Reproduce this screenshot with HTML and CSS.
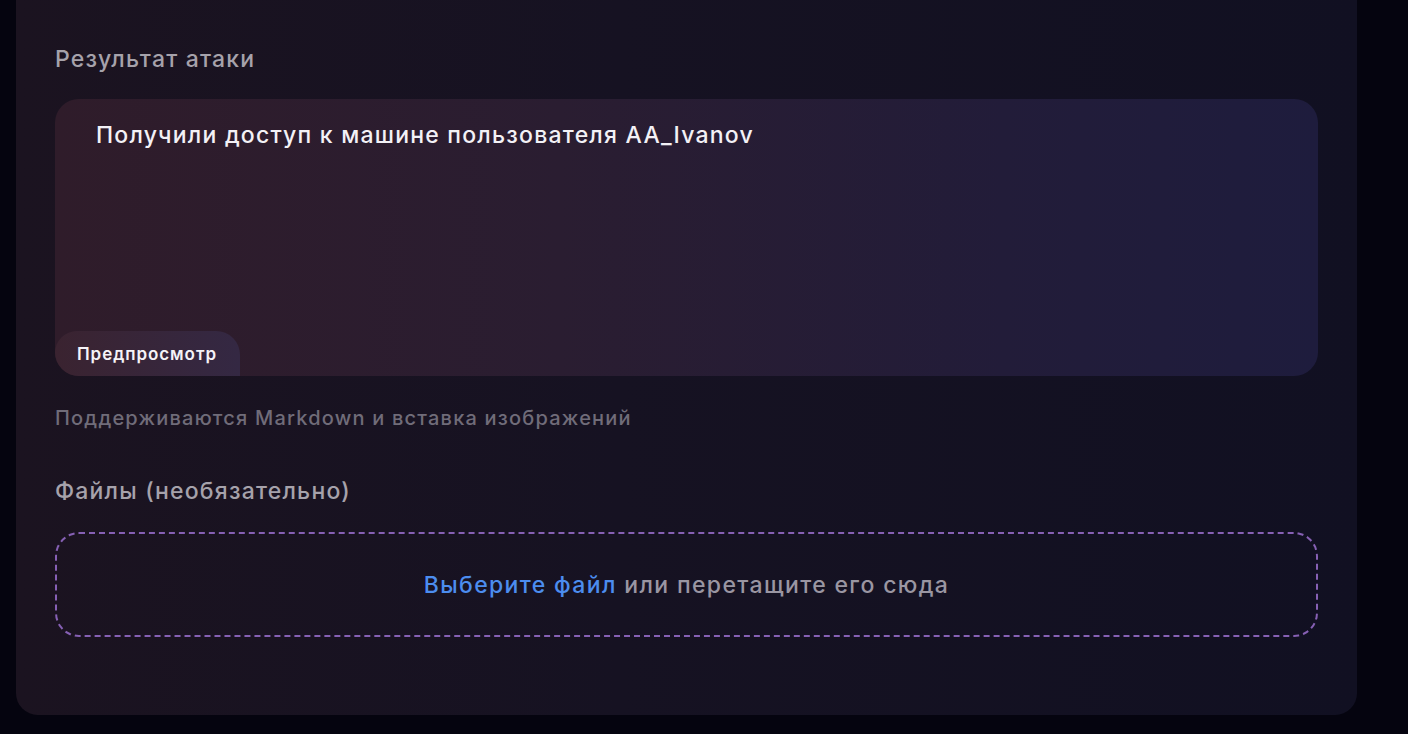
FILE: index.html
```html
<!DOCTYPE html>
<html lang="ru">
<head>
<meta charset="utf-8">
<title>Результат атаки</title>
<link rel="stylesheet" href="styles.css">
</head>
<body>
<div class="page">
  <section class="card">
    <div class="field">
      <div class="label">Результат атаки</div>
      <div class="editor">
        <div class="editor-text">Получили доступ к машине пользователя AA_Ivanov</div>
        <div class="preview-tab">Предпросмотр</div>
      </div>
      <div class="hint">Поддерживаются Markdown и вставка изображений</div>
    </div>
    <div class="field files">
      <div class="label">Файлы (необязательно)</div>
      <div class="dropzone">
        <span class="link">Выберите файл</span>&nbsp;или перетащите его сюда
      </div>
    </div>
  </section>
</div>
</body>
</html>
```

FILE: styles.css
```css
html, body {
  margin: 0;
  padding: 0;
  background: #05040f;
  height: 100%;
}
body {
  font-family: Inter, "Noto Sans", "Liberation Sans", sans-serif;
  -webkit-font-smoothing: antialiased;
}
.page {
  padding: 0 51px 19px 16px;
  height: 734px;
  box-sizing: border-box;
}
.card {
  height: 100%;
  box-sizing: border-box;
  border-radius: 0 0 22px 22px;
  background: linear-gradient(90deg, #1b1320 0%, #161222 45%, #111022 100%);
  padding: 45px 39px 0 39px;
}
.label {
  font-size: 23px;
  line-height: 28px;
  letter-spacing: 0.052em;
  color: #a6a2ab;
  font-weight: 500;
}
.editor {
  margin-top: 26px;
  height: 277px;
  border-radius: 24px;
  background: linear-gradient(90deg, #2f1c2a 0%, #2a1d31 40%, #221c39 75%, #1e1c3d 100%);
  position: relative;
  overflow: hidden;
}
.editor-text {
  padding: 22px 41px;
  font-size: 23px;
  line-height: 28px;
  letter-spacing: 0.053em;
  color: #f3f1f6;
  font-weight: 500;
}
.preview-tab {
  position: absolute;
  left: 0;
  bottom: 0;
  width: 185px;
  height: 45px;
  box-sizing: border-box;
  padding-left: 22px;
  display: flex;
  align-items: center;
  font-size: 17px;
  letter-spacing: 0.055em;
  font-weight: 600;
  color: #f5f3f7;
  background: linear-gradient(90deg, #3a2330 0%, #342843 100%);
  border-radius: 22px 24px 0 0;
}
.hint {
  margin-top: 29px;
  font-size: 20px;
  line-height: 26px;
  letter-spacing: 0.06em;
  color: #706c79;
  font-weight: 500;
}
.files {
  margin-top: 46px;
}
.dropzone {
  margin-top: 27px;
  height: 105px;
  box-sizing: border-box;
  border: 2px dashed #8660b4;
  border-radius: 24px;
  display: flex;
  align-items: center;
  justify-content: center;
  font-size: 23px;
  letter-spacing: 0.059em;
  color: #9a96a2;
  font-weight: 500;
}
.link {
  color: #4c8def;
}
```
